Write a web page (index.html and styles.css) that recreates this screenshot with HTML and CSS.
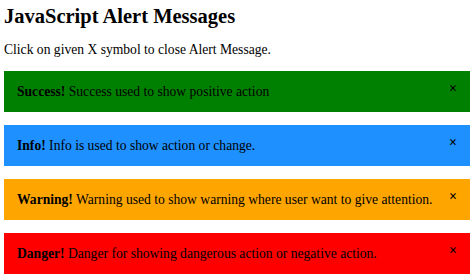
FILE: index.html
```html
<!DOCTYPE html>
<html>
<head>
<meta charset="utf-8">
<link rel="stylesheet" href="styles.css">
</head>
<body>
<h2 class="title">JavaScript Alert Messages</h2>
<p class="intro">Click on given X symbol to close Alert Message.</p>
<div class="alert success"><span class="close">&times;</span><strong>Success!</strong> Success used to show positive action</div>
<div class="alert info"><span class="close">&times;</span><strong>Info!</strong> Info is used to show action or change.</div>
<div class="alert warning"><span class="close">&times;</span><strong>Warning!</strong> Warning used to show warning where user want to give attention.</div>
<div class="alert danger"><span class="close">&times;</span><strong>Danger!</strong> Danger for showing dangerous action or negative action.</div>
</body>
</html>
```
FILE: styles.css
```css
body {
  margin: 0 4px;
  font-family: "Liberation Serif", "Times New Roman", serif;
  font-size: 13.6px;
  color: #000;
  background: #fff;
}
.title {
  font-size: 20.5px;
  line-height: 22px;
  margin: 5px 0 0;
}
.intro {
  margin: 15px 0 0;
  line-height: 15px;
}
.alert {
  margin-top: 14px;
  padding: 13px;
  line-height: 15px;
  color: #000;
}
.alert + .alert { margin-top: 13px; }
.success { background: #008000; }
.info { background: #1e90ff; }
.warning { background: #ffa500; }
.danger { background: #ff0000; }
.close {
  float: right;
  font-size: 14px;
  line-height: 10px;
  margin-left: 12px;
  margin-right: 0;
  font-weight: bold;
  color: #000;
  cursor: pointer;
}
```
